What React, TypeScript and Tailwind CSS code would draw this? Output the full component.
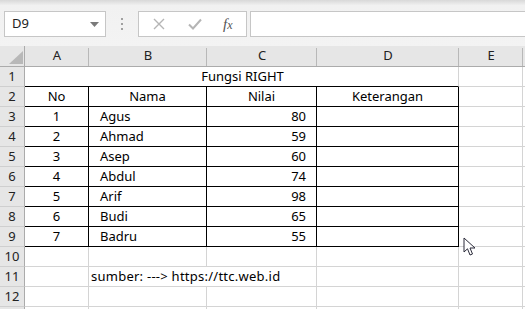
import React from "react";

const cols = ["A", "B", "C", "D", "E"];
const data: [string, string, string][] = [
  ["1", "Agus", "80"],
  ["2", "Ahmad", "59"],
  ["3", "Asep", "60"],
  ["4", "Abdul", "74"],
  ["5", "Arif", "98"],
  ["6", "Budi", "65"],
  ["7", "Badru", "55"],
];

const gridCell = "h-[20px] border-r border-b border-[#d4d4d4] flex items-center";
const rowHead =
  "h-[20px] bg-[#e6e6e6] border-r border-b border-r-[#ababab] border-b-[#cfcfcf] flex items-center justify-center text-[13px] text-[#222]";

function RowHeader({ n }: { n?: number }) {
  return <div className={rowHead}>{n}</div>;
}

export default function App() {
  return (
    <div className="relative w-[525px] h-[309px] overflow-hidden bg-white font-['Noto_Sans',sans-serif] text-black">
      {/* toolbar */}
      <div className="h-[46px] bg-gradient-to-b from-[#d8d8d8] via-[#f1f1f1] via-[12%] to-[#f3f3f3] flex items-start pt-[11px] pl-[4px]">
        <div className="w-[102px] h-[26px] bg-white border border-[#c6c6c6] flex items-center justify-between pl-[7px] pr-[6px]">
          <span className="text-[13px] text-[#222]">D9</span>
          <svg width="9" height="5" viewBox="0 0 9 5">
            <path d="M0 0 L9 0 L4.5 5 Z" fill="#7a7a7a" />
          </svg>
        </div>
        <div className="w-[32px] h-[26px] flex flex-col items-center justify-center gap-[3px]">
          <div className="w-[2px] h-[2px] bg-[#a0a0a0]" />
          <div className="w-[2px] h-[2px] bg-[#a0a0a0]" />
          <div className="w-[2px] h-[2px] bg-[#a0a0a0]" />
        </div>
        <div className="w-[109px] h-[26px] bg-white border border-[#c6c6c6] flex items-center pl-[14px]">
          <svg width="12" height="12" viewBox="0 0 12 12">
            <path d="M1 1 L11 11 M11 1 L1 11" stroke="#b5b5b5" strokeWidth="1.4" />
          </svg>
          <svg width="14" height="12" viewBox="0 0 14 12" className="ml-[23px]">
            <path d="M1 6.5 L5 10.5 L13 1.5" stroke="#b5b5b5" strokeWidth="2" fill="none" />
          </svg>
          <span className="ml-[21px] font-['Liberation_Serif',serif] italic text-[15px] text-[#555] leading-none">
            f<span className="text-[12px]">x</span>
          </span>
        </div>
        <div className="ml-[3px] flex-1 h-[26px] bg-white border border-[#c6c6c6] border-r-0" />
      </div>

      {/* sheet */}
      <div className="grid grid-cols-[25px_64px_118px_110px_142px_64px_1fr] text-[13px]">
        {/* column header */}
        <div className="h-[21px] bg-[#e6e6e6] border-r border-b border-[#ababab] relative">
          <svg width="14" height="13" viewBox="0 0 14 13" className="absolute left-[9px] top-[5px]">
            <path d="M14 0 L14 13 L0 13 Z" fill="#b8b8b8" />
          </svg>
        </div>
        {cols.map((c) => (
          <div
            key={c}
            className="h-[21px] bg-[#e6e6e6] border-b border-b-[#ababab] flex items-end justify-center pb-[1px] relative text-[13px] text-[#222]"
          >
            {c}
            <div className="absolute right-0 top-[2px] bottom-0 w-px bg-[#b8b8b8]" />
          </div>
        ))}
        <div className="h-[21px] bg-[#e6e6e6] border-b border-b-[#ababab]" />

        {/* row 1 */}
        <RowHeader n={1} />
        <div className="col-span-4 h-[20px] border-r border-r-[#d4d4d4] border-b border-b-black flex items-center justify-center pl-[2px]">
          Fungsi RIGHT
        </div>
        <div className={gridCell} />
        <div className="h-[20px] border-b border-[#d4d4d4]" />

        {/* row 2 */}
        <RowHeader n={2} />
        <div className={`${gridCell} border-black justify-center`}>No</div>
        <div className={`${gridCell} border-black justify-center`}>Nama</div>
        <div className={`${gridCell} border-black justify-center`}>Nilai</div>
        <div className={`${gridCell} border-black justify-center`}>Keterangan</div>
        <div className={gridCell} />
        <div className="h-[20px] border-b border-[#d4d4d4]" />

        {data.map(([no, nama, nilai], i) => (
          <React.Fragment key={no}>
            <RowHeader n={i + 3} />
            <div className={`${gridCell} border-black justify-center`}>{no}</div>
            <div className={`${gridCell} border-black pl-[11px]`}>{nama}</div>
            <div className={`${gridCell} border-black justify-end pr-[10px]`}>{nilai}</div>
            <div className={`${gridCell} border-black`} />
            <div className={gridCell} />
            <div className="h-[20px] border-b border-[#d4d4d4]" />
          </React.Fragment>
        ))}

        {/* row 10 */}
        <RowHeader n={10} />
        <div className={gridCell} />
        <div className={gridCell} />
        <div className={gridCell} />
        <div className={gridCell} />
        <div className={gridCell} />
        <div className="h-[20px] border-b border-[#d4d4d4]" />

        {/* row 11: text in B overflows into C */}
        <RowHeader n={11} />
        <div className={gridCell} />
        <div className={`${gridCell} col-span-2 pl-[2px] whitespace-nowrap tracking-[0.25px]`}>
          sumber: ---&gt; https://ttc.web.id
        </div>
        <div className={gridCell} />
        <div className={gridCell} />
        <div className="h-[20px] border-b border-[#d4d4d4]" />

        {/* row 12 */}
        <RowHeader n={12} />
        <div className={gridCell} />
        <div className={gridCell} />
        <div className={gridCell} />
        <div className={gridCell} />
        <div className={gridCell} />
        <div className="h-[20px] border-b border-[#d4d4d4]" />

        {/* row 13 (only top edge visible) */}
        <RowHeader />
        <div className={gridCell} />
        <div className={gridCell} />
        <div className={gridCell} />
        <div className={gridCell} />
        <div className={gridCell} />
        <div className="h-[20px] border-b border-[#d4d4d4]" />
      </div>

      {/* mouse cursor */}
      <svg
        width="14"
        height="21"
        viewBox="0 0 14 21"
        className="absolute left-[463px] top-[237px]"
      >
        <path
          d="M1 1 L1 15 L4.5 11.8 L7 18 L9.5 17 L7 11 L12 11 Z"
          fill="white"
          stroke="#2b2b3a"
          strokeWidth="1"
          strokeLinejoin="round"
        />
      </svg>
    </div>
  );
}
